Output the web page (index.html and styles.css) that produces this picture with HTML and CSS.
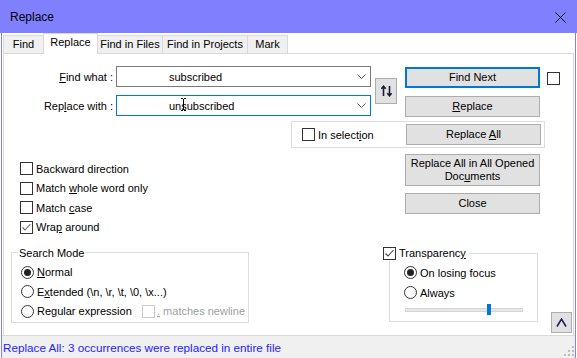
FILE: index.html
```html
<!DOCTYPE html>
<html>
<head>
<meta charset="utf-8">
<title>Replace</title>
<link rel="stylesheet" href="styles.css">
</head>
<body>
<div class="window">
  <div class="titlebar">
    <span class="title">Replace</span>
    <svg class="close" width="11" height="11" viewBox="0 0 11 11"><path d="M0.5 0.5L10.5 10.5M10.5 0.5L0.5 10.5" stroke="#000" stroke-width="1" fill="none"/></svg>
  </div>
  <div class="frame">
    <div class="tabs">
      <div class="tab t-find">Find</div>
      <div class="tab t-replace active">Replace</div>
      <div class="tab t-files">Find in Files</div>
      <div class="tab t-projects">Find in Projects</div>
      <div class="tab t-mark">Mark</div>
    </div>
    <div class="panel">
      <div class="top">
        <div class="lbl row1"><span><u>F</u>ind what :</span></div>
        <div class="combo row1">
          <span class="combo-text">subscribed</span>
          <svg class="chev" width="9" height="5" viewBox="0 0 9 5"><path d="M0.5 0.5L4.5 4.5L8.5 0.5" stroke="#555" fill="none"/></svg>
        </div>
        <button class="swap" type="button">
          <svg width="11" height="12" viewBox="0 0 11 12"><path d="M2.5 11V1.5M0.3 3.8L2.5 1.2L4.7 3.8M8.5 1V10.5M6.3 8.2L8.5 10.8L10.7 8.2" stroke="#1b1b3c" stroke-width="1.6" fill="none"/></svg>
        </button>
        <button class="btn default row1" type="button">Find Next</button>
        <span class="cb side"></span>

        <div class="lbl row2"><span>Rep<u>l</u>ace with :</span></div>
        <div class="combo focus row2">
          <span class="combo-text">unsubscribed</span>
          <svg class="ibeam" width="5" height="13" viewBox="0 0 5 13"><path d="M0 0.5H2M3 0.5H5M2.5 1V12M0 12.5H2M3 12.5H5" stroke="#000" stroke-width="1" fill="none"/></svg>
          <svg class="chev" width="9" height="5" viewBox="0 0 9 5"><path d="M0.5 0.5L4.5 4.5L8.5 0.5" stroke="#555" fill="none"/></svg>
        </div>
        <button class="btn row2" type="button"><u>R</u>eplace</button>

        <div class="selgroup">
          <span class="cb"></span><span class="cbl">In select<u>i</u>on</span>
          <button class="btn inner" type="button">Replace <u>A</u>ll</button>
        </div>
      </div>

      <div class="bottom">
        <div class="leftcol">
          <div class="checks">
            <div class="chk"><span class="cb"></span><span class="cbl">Backward direction</span></div>
            <div class="chk"><span class="cb"></span><span class="cbl">Match <u>w</u>hole word only</span></div>
            <div class="chk"><span class="cb"></span><span class="cbl">Match <u>c</u>ase</span></div>
            <div class="chk"><span class="cb checked"><svg width="11" height="11" viewBox="0 0 11 11"><path d="M1.5 5.5L4 8L9.5 2" stroke="#666" stroke-width="1.1" fill="none"/></svg></span><span class="cbl">Wra<u>p</u> around</span></div>
          </div>
          <fieldset class="group mode">
            <legend>Search Mode</legend>
            <div class="radios">
              <div class="chk"><span class="rb on"></span><span class="cbl"><u>N</u>ormal</span></div>
              <div class="chk"><span class="rb"></span><span class="cbl">E<u>x</u>tended (\n, \r, \t, \0, \x...)</span></div>
              <div class="chk"><span class="rb"></span><span class="cbl rx">Re<u>g</u>ular expression</span><span class="cb disabled"></span><span class="cbl dim"><u>.</u> matches newline</span></div>
            </div>
          </fieldset>
        </div>
        <div class="rightcol">
          <button class="btn tall" type="button">Replace All in All Opened<br>Doc<u>u</u>ments</button>
          <button class="btn close-btn" type="button">Close</button>
          <div class="trow">
            <fieldset class="group trans">
              <legend><span class="cb checked"><svg width="11" height="11" viewBox="0 0 11 11"><path d="M1.5 5.5L4 8L9.5 2" stroke="#444" stroke-width="1.1" fill="none"/></svg></span><span class="cbl">Transparenc<u>y</u></span></legend>
              <div class="radios">
                <div class="chk"><span class="rb on"></span><span class="cbl">On losing focus</span></div>
                <div class="chk"><span class="rb"></span><span class="cbl">Always</span></div>
              </div>
              <div class="slider"><span class="thumb"></span></div>
            </fieldset>
            <button class="collapse" type="button"><svg width="11" height="9" viewBox="0 0 11 9"><path d="M1 8.5L5.5 1L10 8.5" stroke="#1b1b5a" stroke-width="1.5" fill="none"/></svg></button>
          </div>
        </div>
      </div>
    </div>
    <div class="status">
      <span class="status-text">Replace All: 3 occurrences were replaced in entire file</span>
      <svg class="grip" width="10" height="10" viewBox="0 0 10 10"><g fill="#bdbdbd"><rect x="8" y="0" width="2" height="2"/><rect x="4" y="4" width="2" height="2"/><rect x="8" y="4" width="2" height="2"/><rect x="0" y="8" width="2" height="2"/><rect x="4" y="8" width="2" height="2"/><rect x="8" y="8" width="2" height="2"/></g></svg>
    </div>
  </div>
</div>
</body>
</html>
```
FILE: styles.css
```css
* { box-sizing: border-box; }
html, body { margin: 0; padding: 0; }
body {
  width: 577px;
  height: 358px;
  overflow: hidden;
  background: #fff;
  font-family: "Liberation Sans", Arial, sans-serif;
  font-size: 11px;
  color: #000;
}
u { text-decoration: underline; text-underline-offset: 1px; }
button { font: inherit; color: inherit; margin: 0; padding: 0; }

.window { display: flex; flex-direction: column; height: 358px; }

.titlebar {
  flex: none;
  height: 33px;
  background: #8080ff;
  display: flex;
  align-items: center;
  justify-content: space-between;
  padding: 0 11px 0 10px;
}
.title { font-size: 12px; }
.close { display: block; margin-top: 1px; }

.frame {
  flex: 1;
  display: flex;
  flex-direction: column;
  margin: 0 1px;
  border-left: 1px solid #8080ff;
  border-right: 1px solid #8080ff;
  min-height: 0;
}

.tabs {
  flex: none;
  height: 20px;
  display: flex;
  align-items: flex-end;
  padding-left: 1px;
}
.tab {
  height: 18px;
  background: #f0f0f0;
  border: 1px solid #d9d9d9;
  border-bottom: none;
  display: flex;
  align-items: center;
  justify-content: center;
  margin-left: -1px;
  padding-bottom: 1px;
}
.tab:first-child { margin-left: 0; }
.tab.active {
  height: 21px;
  background: #fff;
  margin-bottom: -1px;
  position: relative;
  z-index: 1;
  padding-bottom: 4px;
}
.t-find { width: 41px; }
.t-replace { width: 55px; }
.t-files { width: 66px; }
.t-projects { width: 86px; }
.t-mark { width: 41px; }

.panel {
  flex: 1;
  margin: 0 1px;
  border: 1px solid #d9d9d9;
  border-bottom: none;
  background: #fff;
  display: flex;
  flex-direction: column;
  min-height: 0;
}

.top {
  display: grid;
  grid-template-columns: 112px 175px 80px 34px 135px 1fr;
  grid-template-rows: 29px 26px 27px;
  margin-top: 12px;
}
.row1 { grid-row: 1; }
.row2 { grid-row: 2; }
.lbl {
  grid-column: 1;
  height: 21px;
  display: flex;
  align-items: center;
  justify-content: flex-end;
  padding-right: 3px;
}
.combo {
  grid-column: 2 / 4;
  height: 21px;
  border: 1px solid #7a7a7a;
  display: flex;
  align-items: center;
  padding-left: 52px;
  position: relative;
}
.combo.focus { border-color: #0078d7; }
.combo-text { flex: 1; }
.chev { margin-right: 4px; }
.ibeam { position: absolute; left: 64px; top: 2px; }

.swap {
  grid-column: 4;
  grid-row: 1 / 3;
  align-self: start;
  margin-top: 12px;
  margin-left: 4px;
  width: 22px;
  height: 26px;
  background: #e1e1e1;
  border: 1px solid #adadad;
  display: flex;
  align-items: center;
  justify-content: center;
}
.swap svg { display: block; }

.btn {
  width: 135px;
  height: 21px;
  background: #e1e1e1;
  border: 1px solid #adadad;
  text-align: center;
  line-height: 13px;
}
.top > .btn { grid-column: 5; align-self: start; margin-top: 1px; }
.btn.default { border: 2px solid #0078d7; }

.cb {
  width: 13px;
  height: 13px;
  flex: none;
  border: 1px solid #333;
  background: #fff;
  display: inline-flex;
  align-items: center;
  justify-content: center;
}
.cb svg { display: block; }
.cb.disabled { border-color: #cccccc; }
.side { grid-column: 6; grid-row: 1; margin: 6px 0 0 7px; align-self: start; }

.cbl { margin-left: 3px; white-space: nowrap; }
.cbl.dim { color: #a0a0a0; margin-left: 2px; }
.cbl.rx { width: 105px; }

.selgroup {
  grid-row: 3;
  grid-column: 3 / 7;
  margin-right: 28px;
  border: 1px solid #dcdcdc;
  display: flex;
  align-items: center;
  padding-left: 10px;
}
.selgroup .inner { margin-left: auto; margin-right: 3px; }

.bottom { flex: 1; display: flex; min-height: 0; }
.leftcol { width: 371px; padding-left: 7px; display: flex; flex-direction: column; }
.checks { display: flex; flex-direction: column; gap: 6.5px; margin: 14px 0 0 9px; }
.chk { display: flex; align-items: center; height: 13px; }

.group {
  margin: 0;
  padding: 0;
  border: 1px solid #dcdcdc;
  min-width: 0;
}
.group legend { padding: 0 1px; line-height: 16px; }
.mode { width: 238px; margin-top: 11px; padding-bottom: 4px; }
.mode legend { margin-left: 6px; }
.radios { display: flex; flex-direction: column; gap: 6.5px; padding-top: 5px; }
.mode .radios { padding-left: 9px; }

.rb {
  width: 13px;
  height: 13px;
  flex: none;
  border: 1px solid #333;
  border-radius: 50%;
  background: #fff;
  display: inline-flex;
  align-items: center;
  justify-content: center;
}
.rb.on::after {
  content: "";
  width: 7px;
  height: 7px;
  border-radius: 50%;
  background: #222;
}

.rightcol { flex: 1; display: flex; flex-direction: column; padding-left: 14px; }
.rightcol > .btn { margin-left: 16px; }
.tall { height: 32px; margin-top: 6px; }
.close-btn { margin-top: 7px; }

.trow { display: flex; align-items: flex-start; margin-top: 31px; }
.trans { width: 149px; padding-bottom: 9px; }
.trans legend {
  display: flex;
  align-items: center;
  margin-left: -7px;
  padding: 0 3px 0 0;
  background: #fff;
}
.trans .radios { padding-left: 14px; padding-top: 5px; gap: 7px; }
.slider {
  position: relative;
  width: 118px;
  height: 4px;
  margin: 9px 0 0 15px;
  background: #e7e7e7;
  border: 1px solid #d6d6d6;
}
.thumb {
  position: absolute;
  left: 81px;
  top: -5px;
  width: 4px;
  height: 11px;
  background: #0078d7;
}
.collapse {
  width: 21px;
  height: 21px;
  margin: 67px 0 0 13px;
  background: #e1e1e1;
  border: 1px solid #adadad;
  display: flex;
  align-items: center;
  justify-content: center;
}
.collapse svg { display: block; }

.status {
  flex: none;
  height: 23px;
  background: #f0f0f0;
  border-top: 1px solid #d9d9d9;
  display: flex;
  align-items: center;
  padding-left: 1px;
}
.status-text { color: #2323ff; font-size: 11.7px; }
.grip { margin-left: auto; align-self: flex-end; margin-bottom: 2px; margin-right: 1px; }
```
